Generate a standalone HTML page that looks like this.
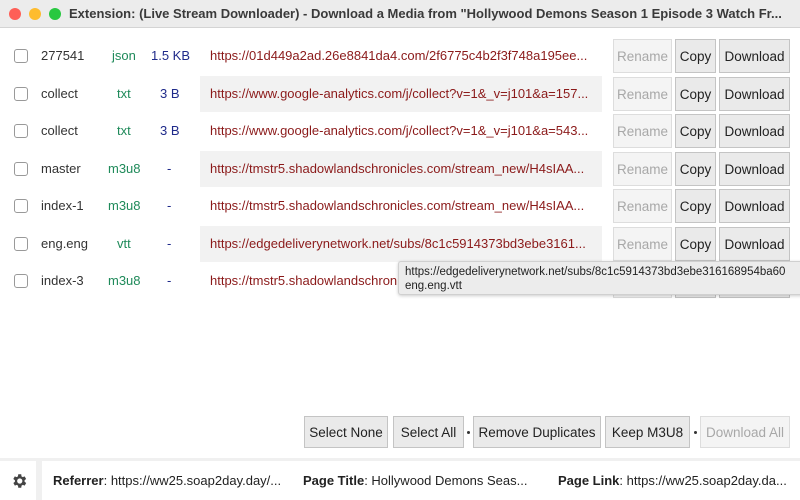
<!DOCTYPE html>
<html><head><style>
*{box-sizing:border-box;margin:0;padding:0}
body{width:800px;height:500px;overflow:hidden;background:#fff;font-family:"Liberation Sans",sans-serif;font-size:13px;position:relative;color:#333}
.tb{position:absolute;left:0;top:0;width:800px;height:28px;background:#ececec;border-bottom:1px solid #d4d4d4}
.dot{position:absolute;top:8px;width:12px;height:12px;border-radius:50%}
.title{position:absolute;left:69px;top:6px;font-size:13px;font-weight:bold;color:#3a3a3a;white-space:nowrap}
.a{position:absolute;white-space:nowrap}
.cb{position:absolute;left:14px;width:14px;height:14px;border:1px solid #999;border-radius:3px;background:#fff}
.sh{position:absolute;left:200px;width:402px;height:36px;background:#f2f2f2}
.url{position:absolute;left:210px;color:#8b1a1a;width:385px;overflow:hidden;white-space:nowrap}
.btn{position:absolute;height:34px;border:1px solid #c4c4c4;background:#eaeaea;display:flex;align-items:center;justify-content:center;color:#222;font-size:13.5px}
.dis{background:#f4f4f4;color:#a8a8a8;border-color:#ddd}
.g{color:#1f8a5a}.b{color:#1f2a8a}
.sep{position:absolute;top:431px;width:3px;height:3px;border-radius:50%;background:#333}
</style></head><body>
<div class="tb">
<div class="dot" style="left:9px;background:#fe5f57"></div>
<div class="dot" style="left:29px;background:#febc2e"></div>
<div class="dot" style="left:49px;background:#28c840"></div>
<div class="title">Extension: (Live Stream Downloader) - Download a Media from "Hollywood Demons Season 1 Episode 3 Watch Fr...</div>
</div>

<div class="sh" style="top:76px"></div>
<div class="sh" style="top:151px"></div>
<div class="sh" style="top:226px"></div>

<div class="cb" style="top:49px"></div><div class="a" style="left:41px;top:48px">277541</div><div class="a g" style="left:112px;top:48px">json</div><div class="a b" style="left:151px;top:48px">1.5 KB</div><div class="url" style="top:48px">https://01d449a2ad.26e8841da4.com/2f6775c4b2f3f748a195ee...</div>
<div class="cb" style="top:87px"></div><div class="a" style="left:41px;top:86px">collect</div><div class="a g" style="left:117px;top:86px">txt</div><div class="a b" style="left:160px;top:86px">3 B</div><div class="url" style="top:86px">https://www.google-analytics.com/j/collect?v=1&amp;_v=j101&amp;a=157...</div>
<div class="cb" style="top:124px"></div><div class="a" style="left:41px;top:123px">collect</div><div class="a g" style="left:117px;top:123px">txt</div><div class="a b" style="left:160px;top:123px">3 B</div><div class="url" style="top:123px">https://www.google-analytics.com/j/collect?v=1&amp;_v=j101&amp;a=543...</div>
<div class="cb" style="top:162px"></div><div class="a" style="left:41px;top:161px">master</div><div class="a g" style="left:108px;top:161px">m3u8</div><div class="a b" style="left:167px;top:161px">-</div><div class="url" style="top:161px">https://tmstr5.shadowlandschronicles.com/stream_new/H4sIAA...</div>
<div class="cb" style="top:199px"></div><div class="a" style="left:41px;top:198px">index-1</div><div class="a g" style="left:108px;top:198px">m3u8</div><div class="a b" style="left:167px;top:198px">-</div><div class="url" style="top:198px">https://tmstr5.shadowlandschronicles.com/stream_new/H4sIAA...</div>
<div class="cb" style="top:237px"></div><div class="a" style="left:41px;top:236px">eng.eng</div><div class="a g" style="left:117px;top:236px">vtt</div><div class="a b" style="left:167px;top:236px">-</div><div class="url" style="top:236px">https://edgedeliverynetwork.net/subs/8c1c5914373bd3ebe3161...</div>
<div class="cb" style="top:274px"></div><div class="a" style="left:41px;top:273px">index-3</div><div class="a g" style="left:108px;top:273px">m3u8</div><div class="a b" style="left:167px;top:273px">-</div><div class="url" style="top:273px">https://tmstr5.shadowlandschronicles.com/stream_new/H4sIAA...</div>

<div class="btn dis" style="left:613px;top:39px;width:59px">Rename</div><div class="btn" style="left:675px;top:39px;width:41px">Copy</div><div class="btn" style="left:719px;top:39px;width:71px">Download</div>
<div class="btn dis" style="left:613px;top:77px;width:59px">Rename</div><div class="btn" style="left:675px;top:77px;width:41px">Copy</div><div class="btn" style="left:719px;top:77px;width:71px">Download</div>
<div class="btn dis" style="left:613px;top:114px;width:59px">Rename</div><div class="btn" style="left:675px;top:114px;width:41px">Copy</div><div class="btn" style="left:719px;top:114px;width:71px">Download</div>
<div class="btn dis" style="left:613px;top:152px;width:59px">Rename</div><div class="btn" style="left:675px;top:152px;width:41px">Copy</div><div class="btn" style="left:719px;top:152px;width:71px">Download</div>
<div class="btn dis" style="left:613px;top:189px;width:59px">Rename</div><div class="btn" style="left:675px;top:189px;width:41px">Copy</div><div class="btn" style="left:719px;top:189px;width:71px">Download</div>
<div class="btn dis" style="left:613px;top:227px;width:59px">Rename</div><div class="btn" style="left:675px;top:227px;width:41px">Copy</div><div class="btn" style="left:719px;top:227px;width:71px">Download</div>
<div class="btn dis" style="left:613px;top:264px;width:59px">Rename</div><div class="btn" style="left:675px;top:264px;width:41px">Copy</div><div class="btn" style="left:719px;top:264px;width:71px">Download</div>

<div style="position:absolute;left:398px;top:261px;width:410px;height:34px;background:#ececec;border:1px solid #d0d0d0;border-radius:3px;box-shadow:0 1px 3px rgba(0,0,0,.2);font-size:11.5px;color:#222;padding:3px 6px;line-height:14px;white-space:nowrap;overflow:hidden">https://edgedeliverynetwork.net/subs/8c1c5914373bd3ebe316168954ba60<br>eng.eng.vtt</div>

<div class="btn" style="left:304px;top:416px;width:84px;height:32px">Select None</div>
<div class="btn" style="left:393px;top:416px;width:71px;height:32px">Select All</div>
<div class="sep" style="left:467px"></div>
<div class="btn" style="left:473px;top:416px;width:128px;height:32px">Remove Duplicates</div>
<div class="btn" style="left:605px;top:416px;width:85px;height:32px">Keep M3U8</div>
<div class="sep" style="left:694px"></div>
<div class="btn dis" style="left:700px;top:416px;width:90px;height:32px">Download All</div>

<div style="position:absolute;left:0;top:458px;width:800px;height:42px;background:#f0f0f0"></div>
<div style="position:absolute;left:0;top:461px;width:36px;height:39px;background:#fff"></div>
<div style="position:absolute;left:42px;top:461px;width:758px;height:39px;background:#fff"></div>
<svg style="position:absolute;left:10px;top:472px" width="18" height="18" viewBox="0 0 24 24"><path fill="#444" d="M19.4 13a7.5 7.5 0 0 0 0-2l2.1-1.6-2-3.5-2.5 1a7.5 7.5 0 0 0-1.7-1L15 3h-4l-.4 2.9a7.5 7.5 0 0 0-1.7 1l-2.5-1-2 3.5L6.6 11a7.5 7.5 0 0 0 0 2l-2.1 1.6 2 3.5 2.5-1a7.5 7.5 0 0 0 1.7 1L11 21h4l.4-2.9a7.5 7.5 0 0 0 1.7-1l2.5 1 2-3.5zM13 15.5a3.5 3.5 0 1 1 0-7 3.5 3.5 0 0 1 0 7z"/></svg>
<div class="a" style="left:53px;top:473px;color:#222"><b>Referrer</b>: https://ww25.soap2day.day/...</div>
<div class="a" style="left:303px;top:473px;color:#222"><b>Page Title</b>: Hollywood Demons Seas...</div>
<div class="a" style="left:558px;top:473px;color:#222"><b>Page Link</b>: https://ww25.soap2day.da...</div>
</body></html>
